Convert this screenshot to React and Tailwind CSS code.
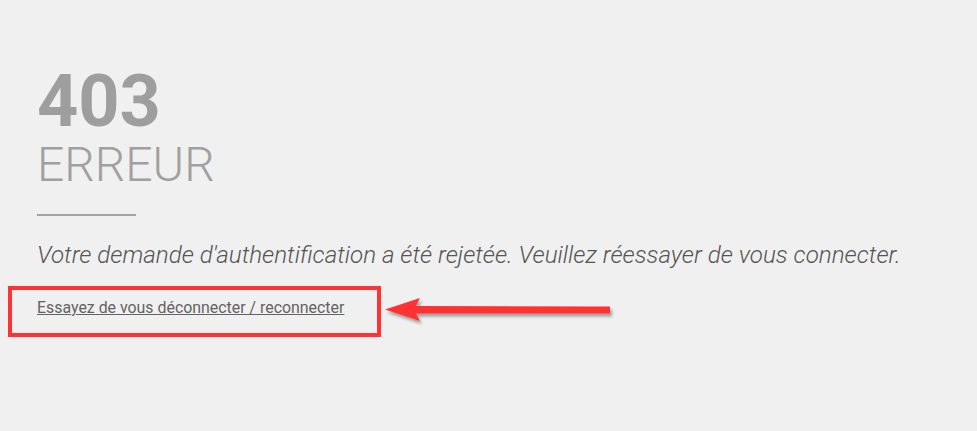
import React from "react";

export default function App() {
  return (
    <div className="relative h-[431px] w-[977px] overflow-hidden bg-[#f0f0f0] font-['Roboto',sans-serif]">
      <div className="pl-[37px] pt-[66px]">
        <h1 className="text-[72px] font-bold leading-[72px] text-[#9e9e9e]">403</h1>
        <h2 className="mt-[2px] text-[48px] font-light leading-[50px] text-[#a0a0a0]">ERREUR</h2>
        <div className="mt-[24px] h-[2px] w-[99px] bg-[#a3a3a3]" />
        <p className="mt-[24px] text-[24.2px] font-light italic leading-[30px] text-[#555555]">
          Votre demande d'authentification a été rejetée. Veuillez réessayer de vous connecter.
        </p>
        <a href="#" className="mt-[28px] inline-block text-[15.9px] leading-[20px] text-[#636363] underline">
          Essayez de vous déconnecter / reconnecter
        </a>
      </div>

      <div className="absolute left-[8px] top-[286px] h-[51px] w-[373px] border-4 border-[#ff3333]" />

      <svg className="absolute left-[380px] top-[290px]" width="250" height="40" viewBox="0 0 250 40">
        <defs>
          <filter id="sh" x="-10%" y="-50%" width="120%" height="200%">
            <feDropShadow dx="2" dy="3" stdDeviation="1.5" floodColor="#000" floodOpacity="0.35" />
          </filter>
        </defs>
        <g filter="url(#sh)" fill="#ff3333">
          <polygon points="5,19.5 40,8 36,16 230,16.5 230,23.5 36,23.5 40,31" />
        </g>
      </svg>
    </div>
  );
}
